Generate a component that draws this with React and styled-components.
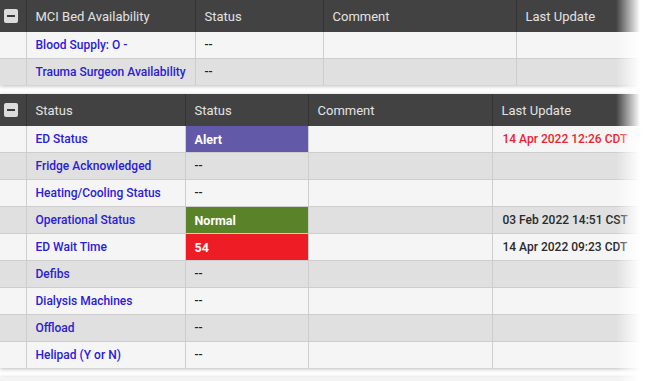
import React from 'react';
import styled, { createGlobalStyle } from 'styled-components';

const GlobalStyle = createGlobalStyle`
  body {
    margin: 0;
    background: #fff;
    font-family: Roboto, "Liberation Sans", sans-serif;
  }
`;

const Page = styled.div`
  position: relative;
  width: 661px;
  height: 381px;
  overflow: hidden;

  &:after {
    content: '';
    position: absolute;
    top: 0;
    right: 0;
    bottom: 0;
    width: 45px;
    background: linear-gradient(to right, rgba(255, 255, 255, 0) 0, rgba(255, 255, 255, 0.5) 12px, #fff 24px);
    pointer-events: none;
  }
`;

const Stack = styled.div`
  display: flex;
  flex-direction: column;
  gap: 9px;
  width: 640px;
`;

const Panel = styled.table`
  width: 640px;
  border-collapse: collapse;
  table-layout: fixed;
  box-shadow: 0 1px 4px rgba(0, 0, 0, 0.28);
`;

const HeadCell = styled.th`
  height: 32px;
  padding: 0 9px;
  background: #424242;
  color: #e2e2e2;
  font-size: 13px;
  font-weight: 400;
  text-align: left;
  border-left: 1px solid #333;
  box-sizing: border-box;
  &:first-child {
    border-left: none;
    padding: 0 4px;
  }
`;

const Toggle = styled.span`
  display: flex;
  align-items: center;
  justify-content: center;
  width: 14px;
  height: 14px;
  border-radius: 2px;
  background: #dcdcdc;

  &:before {
    content: '';
    width: 8px;
    height: 2px;
    background: #3a3a3a;
  }
`;

const Row = styled.tr`
  background: ${({ $alt }) => ($alt ? '#e0e0e0' : '#f5f5f5')};
  border-top: 1px solid #cdcdcd;
  &:first-child {
    border-top: none;
  }
`;

const Cell = styled.td`
  height: 26px;
  padding: 0 9px;
  font-size: 12px;
  font-weight: 500;
  color: #222;
  border-left: 1px solid #cdcdcd;
  white-space: nowrap;
  overflow: hidden;
  &:first-child {
    border-left: none;
  }
`;

const NameCell = styled(Cell)`
  color: #2b20d6;
`;

const tones = {
  alert: '#6259a8',
  normal: '#5a8329',
  danger: '#ee1d25',
};

const StatusCell = styled(Cell)`
  background: ${({ $tone }) => tones[$tone] || 'transparent'};
  color: ${({ $tone }) => ($tone ? '#fff' : '#222')};
  font-weight: ${({ $tone }) => ($tone ? 700 : 500)};
  font-size: ${({ $tone }) => ($tone ? '12.5px' : '12px')};
`;

const DateCell = styled(Cell)`
  color: ${({ $late }) => ($late ? '#ea2430' : '#2a2a2a')};
  padding-left: 10px;
`;

const NextPanel = styled.div`
  height: 20px;
  background: #f3f3f3;
  box-shadow: 0 1px 4px rgba(0, 0, 0, 0.28);
`;

const mci = {
  title: 'MCI Bed Availability',
  widths: [26, 169, 128, 193, 124],
  rows: [
    { name: 'Blood Supply: O -', status: '--' },
    { name: 'Trauma Surgeon Availability', status: '--' },
  ],
};

const ed = {
  title: 'Status',
  widths: [26, 159, 123, 184, 148],
  rows: [
    { name: 'ED Status', status: 'Alert', tone: 'alert', date: '14 Apr 2022 12:26 CDT', late: true },
    { name: 'Fridge Acknowledged', status: '--' },
    { name: 'Heating/Cooling Status', status: '--' },
    { name: 'Operational Status', status: 'Normal', tone: 'normal', date: '03 Feb 2022 14:51 CST' },
    { name: 'ED Wait Time', status: '54', tone: 'danger', date: '14 Apr 2022 09:23 CDT' },
    { name: 'Defibs', status: '--' },
    { name: 'Dialysis Machines', status: '--' },
    { name: 'Offload', status: '--' },
    { name: 'Helipad (Y or N)', status: '--' },
  ],
};

const StatusTable = ({ data }) => (
  <Panel>
    <colgroup>
      {data.widths.map((w, i) => (
        <col key={i} style={{ width: w }} />
      ))}
    </colgroup>
    <thead>
      <tr>
        <HeadCell>
          <Toggle />
        </HeadCell>
        <HeadCell>{data.title}</HeadCell>
        <HeadCell>Status</HeadCell>
        <HeadCell>Comment</HeadCell>
        <HeadCell>Last Update</HeadCell>
      </tr>
    </thead>
    <tbody>
      {data.rows.map((r, i) => (
        <Row key={r.name} $alt={i % 2 === 1}>
          <Cell />
          <NameCell>{r.name}</NameCell>
          <StatusCell $tone={r.tone}>{r.status}</StatusCell>
          <Cell />
          <DateCell $late={r.late}>{r.date}</DateCell>
        </Row>
      ))}
    </tbody>
  </Panel>
);

const App = () => (
  <Page>
    <GlobalStyle />
    <Stack>
      <StatusTable data={mci} />
      <StatusTable data={ed} />
      <NextPanel />
    </Stack>
  </Page>
);

export default App;
